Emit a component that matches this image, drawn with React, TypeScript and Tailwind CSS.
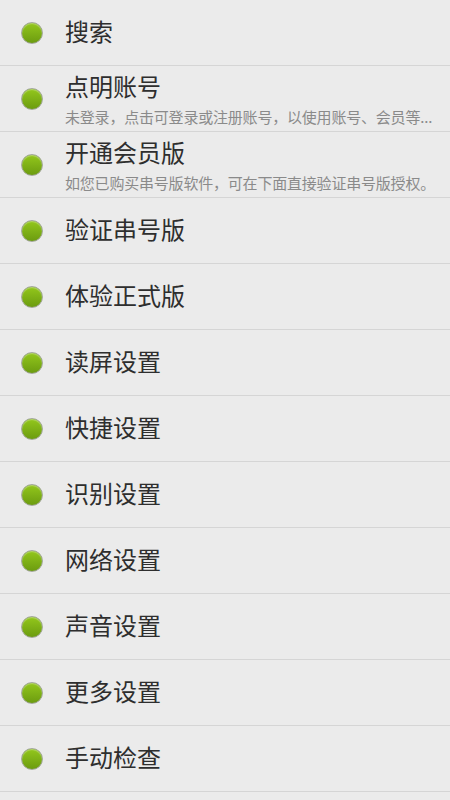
const items: { title: string; sub?: string }[] = [
  { title: "搜索" },
  { title: "点明账号", sub: "未登录，点击可登录或注册账号，以使用账号、会员等..." },
  { title: "开通会员版", sub: "如您已购买串号版软件，可在下面直接验证串号版授权。" },
  { title: "验证串号版" },
  { title: "体验正式版" },
  { title: "读屏设置" },
  { title: "快捷设置" },
  { title: "识别设置" },
  { title: "网络设置" },
  { title: "声音设置" },
  { title: "更多设置" },
  { title: "手动检查" },
]

function Dot() {
  return (
    <span className="block w-[22px] h-[22px] shrink-0 rounded-full border border-[#a3a89a] bg-gradient-to-b from-[#93c71c] to-[#6c9c10] shadow-[inset_0_1px_1px_rgba(255,255,255,0.35)]" />
  )
}

export default function App() {
  return (
    <div
      className="w-[450px] h-[800px] overflow-hidden bg-[#ebebeb]"
      style={{ fontFamily: '"Noto Sans CJK SC", "Noto Sans", sans-serif' }}
    >
      <ul>
        {items.map((item) => (
          <li
            key={item.title}
            className="flex items-center h-[66px] border-b border-[#d5d5d5]"
          >
            <div className="w-[65px] pl-[21px] shrink-0">
              <Dot />
            </div>
            {item.sub ? (
              <div className="flex flex-col justify-center min-w-0">
                <span className="text-[24px] leading-[28px] text-[#2e2e2e]">{item.title}</span>
                <span className="mt-[8px] text-[15px] leading-[18px] tracking-[-0.2px] text-[#8a8a8a] whitespace-nowrap">
                  {item.sub}
                </span>
              </div>
            ) : (
              <span className="pb-1 text-[24px] leading-[28px] text-[#2e2e2e]">{item.title}</span>
            )}
          </li>
        ))}
      </ul>
    </div>
  )
}
